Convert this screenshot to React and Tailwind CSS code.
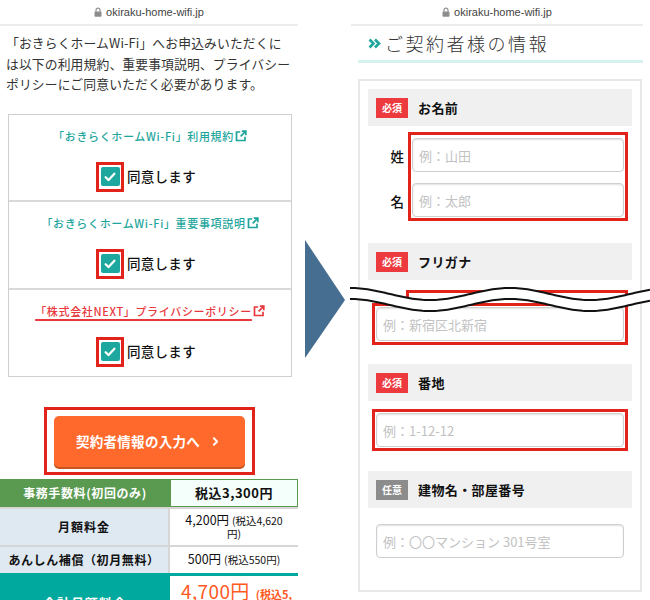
import { ChevronRight } from 'lucide-react';

/* small bits reused on both phone shots */
function Lock() {
  return (
    <svg width="8" height="10" viewBox="0 0 8 10" className="mr-[4px]">
      <path d="M2 4.8V3.2a2 2 0 0 1 4 0v1.6" fill="none" stroke="#8d8d8d" strokeWidth="1.2" />
      <rect x="0.5" y="4.5" width="7" height="5.2" rx="1" fill="#8d8d8d" />
    </svg>
  );
}

function UrlBar() {
  return (
    <div className="h-[26px] flex items-center justify-center border-b-2 border-[#ececec] text-[11px] text-[#444] font-['Liberation_Sans',sans-serif]">
      <Lock />
      okiraku-home-wifi.jp
    </div>
  );
}

function ExtIcon({ color }) {
  return (
    <svg width="12" height="12" viewBox="0 0 12 12" className="ml-[1px] shrink-0">
      <path d="M5.2 2H1.5v8.5H10V6.8" fill="none" stroke={color} strokeWidth="1.7" />
      <path d="M6.8 1.2h4v4" fill="none" stroke={color} strokeWidth="1.7" />
      <path d="M10.8 1.2L5.6 6.4" stroke={color} strokeWidth="1.7" />
    </svg>
  );
}

function Agree() {
  return (
    <div className="mt-[18px] flex items-center justify-center pr-[8px]">
      <div className="w-[28px] h-[30px] border-[3px] border-[#e2231a] flex items-center justify-center">
        <div className="w-[19px] h-[19px] rounded-[2px] bg-[#1ea79e] flex items-center justify-center">
          <svg width="12" height="10" viewBox="0 0 12 10">
            <path d="M1.6 5.2l3 2.9 5.8-6.4" fill="none" stroke="#fff" strokeWidth="2.2" strokeLinecap="round" strokeLinejoin="round" />
          </svg>
        </div>
      </div>
      <span className="ml-[3px] text-[13.5px] font-medium tracking-[0.02em] text-[#111]">同意します</span>
    </div>
  );
}

function Left() {
  return (
    <div className="w-[298px] shrink-0">
      <UrlBar />

      <p className="pl-[6px] pt-[7px] text-[12.8px] leading-[20.5px] tracking-[0.01em] text-[#333] whitespace-nowrap">
        「おきらくホームWi-Fi」へお申込みいただくに
        <br />
        は以下の利用規約、重要事項説明、プライバシー
        <br />
        ポリシーにご同意いただく必要があります。
      </p>

      {/* agreement box */}
      <div className="ml-[8px] mt-[19px] w-[284px] border border-[#cfcfcf]">
        <div className="h-[87px] pt-[14px] border-b-2 border-[#d9d9d9]">
          <div className="h-[15px] flex items-center justify-center text-[11px] font-medium tracking-[0.06em] text-[#1ea59c]">
            「おきらくホームWi-Fi」利用規約
            <ExtIcon color="#1ea59c" />
          </div>
          <Agree />
        </div>
        <div className="h-[88px] pt-[14px] border-b-2 border-[#d9d9d9]">
          <div className="h-[15px] flex items-center justify-center text-[11px] font-medium tracking-[0.06em] text-[#1ea59c]">
            「おきらくホームWi-Fi」重要事項説明
            <ExtIcon color="#1ea59c" />
          </div>
          <Agree />
        </div>
        <div className="h-[86px] pt-[14px]">
          <div className="h-[15px] flex items-center justify-center text-[11px] font-medium tracking-[0.06em] text-[#e8383d]">
            <span className="underline underline-offset-[3px] decoration-[1.5px]">「株式会社NEXT」プライバシーポリシー</span>
            <ExtIcon color="#e8383d" />
          </div>
          <Agree />
        </div>
      </div>

      {/* next button */}
      <div className="mt-[30px] flex justify-center">
        <div className="w-[211px] h-[68px] border-[3px] border-[#e2231a] px-[7px] pt-[6px]">
          <div className="h-[51px] rounded-[5px] bg-[#ff6a2c] shadow-[0_2px_0_#c9541f] flex items-center justify-center text-white text-[13.5px] font-bold tracking-[0.02em]">
            契約者情報の入力へ
            <ChevronRight size={13} strokeWidth={3.5} className="ml-[9px]" />
          </div>
        </div>
      </div>

      {/* price table */}
      <div className="mt-[4px] text-[12px] text-[#111]">
        <div className="flex h-[30px] border-b-2 border-[#d6d6d6]">
          <div className="w-[170px] bg-[#5a9a50] text-white font-bold tracking-[0.05em] flex items-center justify-center">
            事務手数料(初回のみ)
          </div>
          <div className="flex-1 bg-[#f4fffb] border border-[#5a9a50] flex items-center justify-center font-bold text-[13px] tracking-[0.04em]">
            税込3,300円
          </div>
        </div>
        <div className="flex h-[38px] border-b-2 border-[#d6d6d6]">
          <div className="w-[170px] bg-[#dfe9f2] border-r-2 border-[#d6d6d6] font-bold tracking-[0.08em] flex items-center justify-center">
            月額料金
          </div>
          <div className="flex-1 flex flex-col items-center justify-center leading-[13px] text-[12.5px]">
            <div>
              4,200円 <span className="text-[10.5px]">(税込4,620</span>
            </div>
            <div className="text-[10.5px]">円)</div>
          </div>
        </div>
        <div className="flex h-[26px]">
          <div className="w-[170px] bg-[#dfe9f2] border-r-2 border-[#d6d6d6] font-bold tracking-[0.05em] flex items-center justify-center">
            あんしん補償（初月無料）
          </div>
          <div className="flex-1 flex items-center justify-center text-[12.5px]">
            500円 <span className="ml-[3px] text-[10.5px]">(税込550円)</span>
          </div>
        </div>
        <div className="flex h-[58px] border-t-[3px] border-[#00a99d]">
          <div className="w-[170px] bg-[#00a99d] text-white text-[13px] font-bold tracking-[0.08em] flex items-center justify-center">
            合計月額料金
          </div>
          <div className="flex-1 pt-[1px] pl-[11px] text-[#ff5a1f]">
            <span className="text-[19px] tracking-[0.02em]">4,700円</span>
            <span className="ml-[6px] text-[11px] font-bold">(税込5,</span>
          </div>
        </div>
      </div>
    </div>
  );
}

function FieldHead({ req, label }) {
  return (
    <div className="h-[37px] bg-[#f0f0f0] flex items-center pl-[8px]">
      {req ? (
        <span className="w-[32px] h-[20px] flex items-center justify-center bg-[#ec3a3f] text-white text-[10px] font-bold">必須</span>
      ) : (
        <span className="w-[32px] h-[20px] flex items-center justify-center bg-[#8c8c8c] text-white text-[10px] font-bold">任意</span>
      )}
      <span className="ml-[10px] text-[13px] font-bold tracking-[0.03em] text-[#111]">{label}</span>
    </div>
  );
}

function Field({ ph }) {
  return (
    <input
      readOnly
      placeholder={ph}
      className="block w-full h-[34px] rounded-[4px] border border-[#cfcfcf] bg-white shadow-[inset_0_1px_2px_rgba(0,0,0,0.12)] pl-[6px] text-[13px] placeholder:text-[#c2c2c2] outline-none"
    />
  );
}

function Right() {
  return (
    <div className="w-[292px] shrink-0">
      <UrlBar />

      <div className="ml-[7px] h-[37px] pl-[10px] flex items-center border-b-[3px] border-[#d5f1f0]">
        <svg width="13" height="11" viewBox="0 0 13 11" className="mr-[4px]">
          <path d="M1.5 1.5l4 4-4 4M7 1.5l4 4-4 4" fill="none" stroke="#1ea59c" strokeWidth="2.6" />
        </svg>
        <span className="text-[18px] font-light tracking-[0.14em] text-[#333]">ご契約者様の情報</span>
      </div>

      {/* form card */}
      <div className="ml-[7px] mt-[16px] w-[284px] h-[513px] border-2 border-[#e8e8e8] px-[8px] pt-[8px]">
        <FieldHead req label="お名前" />
        <div className="mt-[6px] mr-[4px] flex">
          <div className="w-[40px] pt-[7px] flex flex-col gap-[11px] text-[13.5px] font-medium text-[#111]">
            <div className="h-[34px] flex items-center justify-end pr-[4px]">姓</div>
            <div className="h-[34px] flex items-center justify-end pr-[4px]">名</div>
          </div>
          <div className="flex-1 border-[3px] border-[#e2231a] px-[1px] pt-[3px] pb-[1px] flex flex-col gap-[11px]">
            <Field ph="例：山田" />
            <Field ph="例：太郎" />
          </div>
        </div>

        <div className="mt-[22px]">
          <FieldHead req label="フリガナ" />
        </div>
        {/* cut: only the top of the furigana box shows above the break */}
        <div className="h-[23px] overflow-hidden">
          <div className="mt-[10px] ml-[38px] mr-[4px] h-[40px] border-[3px] border-[#e2231a]" />
        </div>
        <div className="mx-[4px] border-[3px] border-[#e2231a] p-[1px]">
          <Field ph="例：新宿区北新宿" />
        </div>

        <div className="mt-[19px]">
          <FieldHead req label="番地" />
        </div>
        <div className="mt-[8px] mx-[4px] border-[3px] border-[#e2231a] p-[1px]">
          <Field ph="例：1-12-12" />
        </div>

        <div className="mt-[20px]">
          <FieldHead label="建物名・部屋番号" />
        </div>
        <div className="mt-[12px] mx-[4px] border-[3px] border-transparent p-[1px]">
          <Field ph="例：〇〇マンション 301号室" />
        </div>
      </div>
    </div>
  );
}

/* torn-page break drawn over the right shot */
function Wave() {
  const x0 = 350;
  const top = [];
  const bot = [];
  for (let x = 0; x <= 300; x += 2.5) {
    const y = 16 + 6 * Math.cos((2 * Math.PI * (x0 + x - 430)) / 160);
    top.push(`${x},${y.toFixed(2)}`);
    bot.push(`${x},${(y + 11).toFixed(2)}`);
  }
  const fill = [...top, ...[...bot].reverse()].join(' ');
  return (
    <svg width="300" height="40" viewBox="0 0 300 40" className="absolute left-[350px] top-[278px]">
      <polygon points={fill} fill="#fff" />
      <polyline points={top.join(' ')} fill="none" stroke="#111" strokeWidth="2" />
      <polyline points={bot.join(' ')} fill="none" stroke="#111" strokeWidth="2" />
    </svg>
  );
}

export default function App() {
  return (
    <div className="relative w-[650px] h-[600px] overflow-hidden bg-white flex font-['Noto_Sans_CJK_JP','Noto_Sans',sans-serif]">
      <Left />
      <div className="w-[53px] shrink-0">
        <svg width="40" height="118" viewBox="0 0 40 118" className="ml-[7px] mt-[240px]">
          <polygon points="0,0 40,60 0,118" fill="#466e90" />
        </svg>
      </div>
      <Right />
      <Wave />
    </div>
  );
}
